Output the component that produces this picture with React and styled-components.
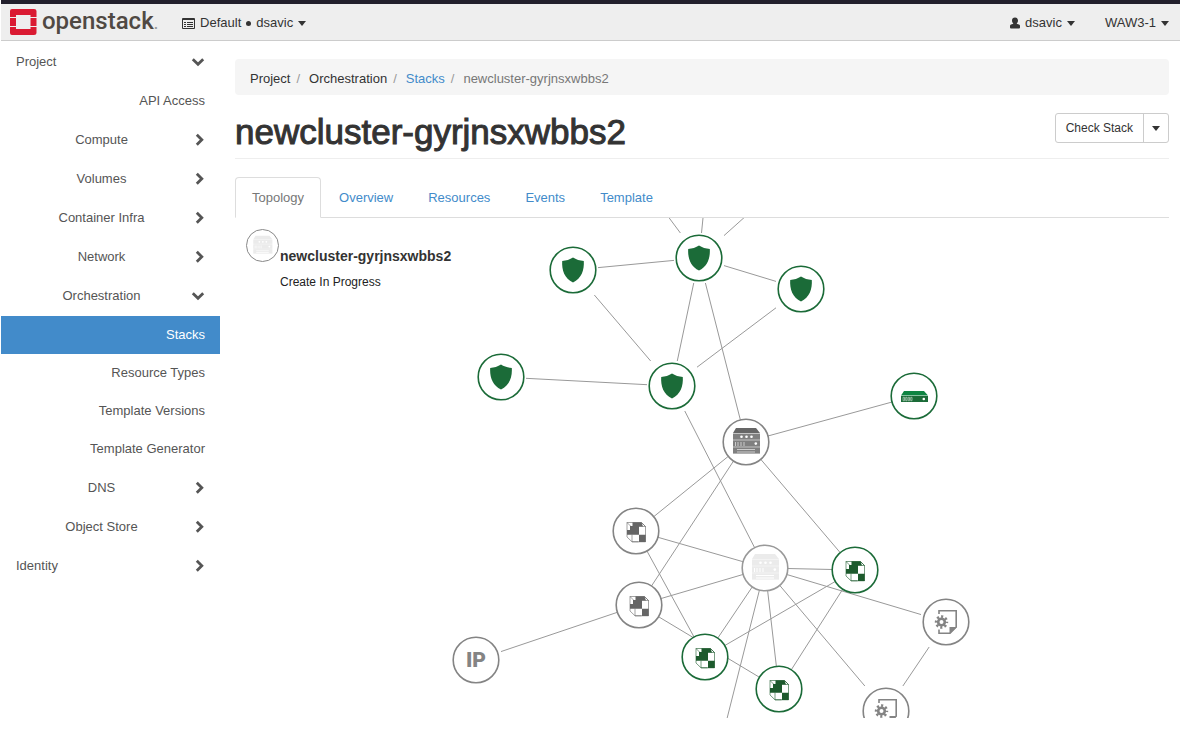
import React from "react";
import styled, { createGlobalStyle, css } from "styled-components";

const Global = createGlobalStyle`
  * { box-sizing: border-box; }
  body {
    margin: 0 0 0 1px;
    background: #fff;
    color: #333;
    font: 13px/18px "Liberation Sans", Arial, sans-serif;
  }
  a { color: inherit; text-decoration: none; }
  button { font: inherit; color: inherit; background: none; border: 0; padding: 0; cursor: pointer; }
  ul, ol { list-style: none; margin: 0; padding: 0; }
`;

/* ---------- top bar ---------- */

const TopBar = styled.header`
  display: flex;
  align-items: center;
  height: 41px;
  padding: 0 11px 0 8px;
  background: #eee;
  border-top: 4px solid #221f2c;
  border-bottom: 1px solid #ccc;
`;

const Brand = styled.a`
  display: flex;
  align-items: center;
  gap: 5px;
  margin-right: 24px;
  color: #504943;
  font: 500 24px/28px Roboto, sans-serif;
`;

const BrandMark = styled.small`
  font-size: 16px;
  color: #999;
`;

const MenuButton = styled.button`
  display: flex;
  align-items: center;
  gap: 5px;
  padding-top: 2px;
  & + & { margin-left: 30px; }
`;

const Spacer = styled.span`
  flex: 1;
`;

const Caret = styled.span`
  border: 4px solid transparent;
  border-top: 5px solid currentColor;
  border-bottom: 0;
`;

const Dot = styled.span`
  width: 5px;
  height: 5px;
  border-radius: 50%;
  background: currentColor;
`;

/* ---------- frame ---------- */

const Frame = styled.div`
  display: flex;
  align-items: flex-start;
`;

const Sidebar = styled.nav`
  flex: none;
  width: 219px;
  padding-top: 1px;
  color: #555;
`;

const Main = styled.main`
  flex: 1;
  min-width: 0;
  padding: 18px 11px 30px 15px;
`;

const GroupRow = styled.button`
  display: flex;
  align-items: center;
  width: 100%;
  height: 39px;
  padding: 0 15px;
`;

const GroupLabel = styled.span`
  flex: 1;
  text-align: ${(p) => (p.$top ? "left" : "center")};
`;

const ChevronBox = styled.span`
  display: flex;
  justify-content: flex-end;
  width: 18px;
`;

const PanelList = styled.div`
  padding-top: 1px;
`;

const PanelLink = styled.a`
  display: flex;
  align-items: center;
  justify-content: flex-end;
  height: ${(p) => (p.$tall ? 39 : 38)}px;
  padding: 0 15px;
  ${(p) => p.$active && css`
    background: #428bca;
    color: #fff;
  `}
`;

/* ---------- page heading ---------- */

const Crumbs = styled.ol`
  display: flex;
  padding: 11px 15px 7px;
  background: #f5f5f5;
  border-radius: 4px;
`;

const Crumb = styled.li`
  color: ${(p) => (p.$current ? "#777" : p.$link ? "#428bca" : "#333")};
  &:not(:first-child)::before {
    content: "/";
    padding: 0 9px 0 6px;
    color: #999;
  }
`;

const TitleRow = styled.div`
  display: flex;
  justify-content: space-between;
  align-items: flex-start;
  padding: 18px 0 7px;
  border-bottom: 1px solid #eee;
`;

const Title = styled.h1`
  margin: 0;
  font-size: 35px;
  line-height: 38px;
  font-weight: 500;
  -webkit-text-stroke: 1px #333;
`;

const ButtonGroup = styled.div`
  display: flex;
  height: 30px;
  border: 1px solid #ccc;
  border-radius: 3px;
  font-size: 12px;
`;

const GroupButton = styled.button`
  display: flex;
  align-items: center;
  padding: 0 ${(p) => (p.$narrow ? 8 : 10)}px;
  &:not(:first-child) { border-left: 1px solid #ccc; }
`;

const Tabs = styled.ul`
  display: flex;
  gap: 1px;
  margin-top: 18px;
  border-bottom: 1px solid #ddd;
`;

const Tab = styled.a`
  display: block;
  height: 41px;
  margin-bottom: -1px;
  padding: 11px 16px;
  color: #428bca;
  border: 1px solid transparent;
  border-radius: 4px 4px 0 0;
  ${(p) => p.$active && css`
    color: #777;
    background: #fff;
    border-color: #ddd #ddd #fff;
  `}
`;

/* ---------- topology ---------- */

const Topology = styled.div`
  position: relative;
  height: 500px;
`;

const Graph = styled.svg`
  display: block;
  width: 100%;
  height: 100%;
  overflow: hidden;
`;

const StackInfo = styled.div`
  position: absolute;
  top: 11px;
  left: 11px;
  display: flex;
  gap: 1px;
`;

const StackText = styled.div`
  padding-top: 18px;
`;

const StackName = styled.h3`
  margin: 0;
  font-size: 14px;
  line-height: 18px;
  font-weight: 700;
`;

const StackStatus = styled.p`
  margin: 8px 0 0;
  font-size: 12px;
  line-height: 18px;
  color: #222;
`;

const GREY = "#848484";
const GREEN = "#1b6b38";

const nodes = {
  s1: [338, 52, "shield"],
  s2: [464, 40, "shield"],
  s3: [566, 71, "shield"],
  s4: [266, 159, "shield"],
  s5: [437, 168, "shield"],
  router: [679, 178, "router"],
  server: [511, 224, "server"],
  stack: [530, 350, "stack"],
  v1: [401, 313, "volume", GREY],
  v2: [404, 387, "volume", GREY],
  v3: [470, 439, "volume", GREEN],
  v4: [544, 471, "volume", GREEN],
  v5: [620, 352, "volume", GREEN],
  ip: [241, 442, "ip"],
  c1: [711, 404, "config"],
  c2: [651, 493, "config"],
  off1: [400, -46],
  off2: [475, -70],
  off3: [560, -46],
  off4: [472, 580],
};

const links = [
  ["s1", "s2"], ["s2", "s3"], ["s1", "s5"], ["s2", "s5"], ["s3", "s5"], ["s4", "s5"],
  ["s2", "off1"], ["s2", "off2"], ["s2", "off3"],
  ["s2", "server"], ["server", "router"], ["server", "v1"], ["server", "v2"], ["server", "v5"],
  ["s5", "stack"], ["stack", "v1"], ["stack", "v2"], ["stack", "v3"], ["stack", "v4"], ["stack", "v5"],
  ["stack", "c1"], ["stack", "c2"], ["stack", "off4"],
  ["v1", "v3"], ["v2", "v4"], ["v3", "v5"], ["v4", "v5"], ["ip", "v2"], ["c1", "c2"],
];

function Shield() {
  return <path fill={GREEN} d="M0-12.500C3-10.500 7-9.300 10.800-9C11.400 0 8.500 8.500 0 12.500C-8.500 8.500-11.400 0-10.800-9C-7-9.300-3-10.500 0-12.500Z" />;
}

function Server({ light }) {
  const dark = light ? "#ebebeb" : "#666";
  const body = light ? "#ebebeb" : "#808080";
  return (
    <g>
      <path fill={light ? "#f3f3f3" : "#c4c4c4"} d="M-13-9H14V11.500H-13Z" />
      <path fill={dark} d="M-10-14H10L14-9H-13Z" />
      <path fill={body} d="M-13-8H14V-2.500H-13ZM-13-1.500H14V4.500H-13ZM-13 5.500H14V11.500H-13Z" />
      <g fill="#fff">
        <circle cx="-4.500" cy="-5.300" r="1.300" />
        <circle cx="0.500" cy="-5.300" r="1.300" />
        <circle cx="5.500" cy="-5.300" r="1.300" />
        <circle cx="9.800" cy="1.600" r="1.300" />
      </g>
      <path stroke={light ? "#fff" : "#ccc"} d="M-10.500 0V4M-8 0V4M-5 0V4M-2 0V4M-9 7.500H9M-9 10H9" />
    </g>
  );
}

function Router() {
  return (
    <g>
      <path fill="#0e8442" d="M-10-5H10L14-0.500H-13Z" />
      <path fill={GREEN} d="M-13 0H14V6H-13Z" />
      <path fill="none" stroke="#a9c9b4" strokeWidth="0.800" d="M-10.900 1.300H-9.500V4.700H-10.900ZM-8.300 1.300H-7V4.700H-8.300ZM-5.800 1.300H-4.500V4.700H-5.800ZM-3.300 1.300H-2V4.700H-3.300Z" />
      <circle cx="9.800" cy="3" r="1.300" fill="#fff" />
    </g>
  );
}

function Volume({ color }) {
  const fill = color === GREY ? "#666" : "#1d5a2d";
  return (
    <g>
      <path fill="#fff" stroke={fill} strokeWidth="0.600" d="M-9-8.500H5.500L9.500-4.500V10.800H-4L-9 6Z" />
      <path fill={fill} d="M-3.500-8.700H5.500L7-4.500H3V3.700H9.700V11H3V3.700H-9V-1H-6V-5H-3.500Z" />
      <path fill="none" stroke={fill} strokeWidth="0.600" d="M-9-8.500L-5-4.500M-5.500-4.500H9.500M-4 3.700V10.800H2.500M5.500-8.500L9.500-4.500" />
    </g>
  );
}

function Config() {
  return (
    <g>
      <path fill="none" stroke={GREY} strokeWidth="1.600" d="M-7-8V-11.200H10.200V5L4 11.200H-7V7.500" />
      <path fill={GREY} d="M3.500 12V5H11Z" />
      <circle cx="-4.500" cy="0" r="3.300" fill="none" stroke={GREY} strokeWidth="2.600" />
      <circle cx="-4.500" cy="0" r="5.400" fill="none" stroke={GREY} strokeWidth="2.600" strokeDasharray="2.120 2.120" strokeDashoffset="1.060" />
    </g>
  );
}

function Node({ x, y, kind, color }) {
  const framed = kind === "shield" || kind === "ip" || kind === "config";
  const ring = color || (kind === "shield" || kind === "router" ? GREEN : kind === "stack" ? "#999" : GREY);
  return (
    <g transform={`translate(${x} ${y})`}>
      {framed && <rect x="-25" y="-25" width="50" height="50" fill="#fff" />}
      <circle r="22.800" fill="#fff" stroke={ring} strokeWidth="1.600" />
      {kind === "shield" && <Shield />}
      {kind === "server" && <Server />}
      {kind === "stack" && <Server light />}
      {kind === "router" && <Router />}
      {kind === "volume" && <Volume color={color} />}
      {kind === "config" && <Config />}
      {kind === "ip" && (
        <text y="7" textAnchor="middle" fontFamily="Roboto, sans-serif" fontWeight="900" fontSize="21" fill={GREY}>IP</text>
      )}
    </g>
  );
}

function Chevron({ open }) {
  return open ? (
    <svg width="14" height="10" viewBox="0 0 14 10" aria-hidden="true">
      <path d="M1.800 2.200L7 7.200L12.200 2.200" fill="none" stroke="#555" strokeWidth="2.800" />
    </svg>
  ) : (
    <svg width="10" height="14" viewBox="0 0 10 14" aria-hidden="true">
      <path d="M1.800 1.800L6.800 6.800L1.800 11.800" fill="none" stroke="#555" strokeWidth="2.800" />
    </svg>
  );
}

function Group({ label, top, open }) {
  return (
    <GroupRow type="button" aria-expanded={!!open}>
      <GroupLabel $top={top}>{label}</GroupLabel>
      <ChevronBox><Chevron open={open} /></ChevronBox>
    </GroupRow>
  );
}

function Logo() {
  return (
    <svg width="28" height="28" viewBox="0 0 28 28" aria-hidden="true">
      <g fill="#da1a32">
        <path d="M3 1H25Q27.500 1 27.500 3V9H21.500V7H7V9H1V3Q1 1 3 1Z" />
        <path d="M1 10H7V18H1ZM21.500 10H27.500V18H21.500Z" />
        <path d="M1 19H7V21H21.500V19H27.500V25Q27.500 27 25 27H3Q1 27 1 25Z" />
      </g>
    </svg>
  );
}

export default function App() {
  return (
    <>
      <Global />
      <TopBar>
        <Brand href="#">
          <Logo />
          <span>openstack<BrandMark>.</BrandMark></span>
        </Brand>
        <MenuButton type="button">
          <svg width="13" height="11" viewBox="0 0 13 11" aria-hidden="true">
            <path fill="none" stroke="#333" d="M0.500 0.500H12.500V10.500H0.500Z" />
            <path stroke="#333" d="M0 1.500H13M2 4.500H4M5 4.500H11M2 6.500H4M5 6.500H11M2 8.500H4M5 8.500H11" />
          </svg>
          <span>Default</span><Dot /><span>dsavic</span><Caret />
        </MenuButton>
        <Spacer />
        <MenuButton type="button">
          <svg width="10" height="12" viewBox="0 0 10 12" aria-hidden="true">
            <path fill="#333" d="M5 0.500C6.900 0.500 8 1.800 8 3.600C8 5 7.400 6 6.600 6.700L9 7.400Q10 7.800 10 9V10.500Q10 11.500 9 11.500H1Q0 11.500 0 10.500V9Q0 7.800 1 7.400L3.400 6.700C2.600 6 2 5 2 3.600C2 1.800 3.100 0.500 5 0.500Z" />
          </svg>
          <span>dsavic</span><Caret />
        </MenuButton>
        <MenuButton type="button"><span>WAW3-1</span><Caret /></MenuButton>
      </TopBar>
      <Frame>
        <Sidebar>
          <Group label="Project" top open />
          <PanelLink href="#" $tall>API Access</PanelLink>
          <Group label="Compute" />
          <Group label="Volumes" />
          <Group label="Container Infra" />
          <Group label="Network" />
          <Group label="Orchestration" open />
          <PanelList>
            <PanelLink href="#" $active>Stacks</PanelLink>
            <PanelLink href="#">Resource Types</PanelLink>
            <PanelLink href="#">Template Versions</PanelLink>
            <PanelLink href="#">Template Generator</PanelLink>
          </PanelList>
          <Group label="DNS" />
          <Group label="Object Store" />
          <Group label="Identity" top />
        </Sidebar>
        <Main>
          <Crumbs>
            <Crumb>Project</Crumb>
            <Crumb>Orchestration</Crumb>
            <Crumb $link><a href="#">Stacks</a></Crumb>
            <Crumb $current>newcluster-gyrjnsxwbbs2</Crumb>
          </Crumbs>
          <TitleRow>
            <Title>newcluster-gyrjnsxwbbs2</Title>
            <ButtonGroup>
              <GroupButton type="button">Check Stack</GroupButton>
              <GroupButton type="button" $narrow aria-label="More actions"><Caret /></GroupButton>
            </ButtonGroup>
          </TitleRow>
          <Tabs>
            <li><Tab href="#" $active>Topology</Tab></li>
            <li><Tab href="#">Overview</Tab></li>
            <li><Tab href="#">Resources</Tab></li>
            <li><Tab href="#">Events</Tab></li>
            <li><Tab href="#">Template</Tab></li>
          </Tabs>
          <Topology>
            <Graph role="img" aria-label="Stack topology">
              <g stroke="#999">
                {links.map(([a, b]) => (
                  <line key={a + b} x1={nodes[a][0]} y1={nodes[a][1]} x2={nodes[b][0]} y2={nodes[b][1]} />
                ))}
              </g>
              {Object.entries(nodes).filter(([, n]) => n[2]).map(([id, [x, y, kind, color]]) => (
                <Node key={id} x={x} y={y} kind={kind} color={color} />
              ))}
            </Graph>
            <StackInfo>
              <svg width="33" height="33" viewBox="-16.500 -16.500 33 33" aria-hidden="true">
                <circle r="16" fill="#fff" stroke="#888" />
                <g transform="scale(0.7)"><Server light /></g>
              </svg>
              <StackText>
                <StackName>newcluster-gyrjnsxwbbs2</StackName>
                <StackStatus>Create In Progress</StackStatus>
              </StackText>
            </StackInfo>
          </Topology>
        </Main>
      </Frame>
    </>
  );
}
